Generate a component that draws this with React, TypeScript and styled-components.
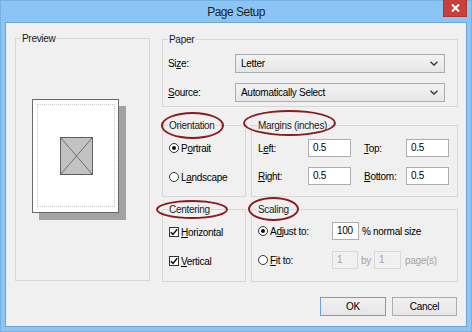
import React from 'react';
import styled, { createGlobalStyle } from 'styled-components';

const FONT = `"Liberation Sans", Arial, sans-serif`;

const GlobalStyle = createGlobalStyle`
  html, body { margin: 0; padding: 0; background: #ffffff; }
  body { font-family: ${FONT}; font-size: 10px; letter-spacing: -0.3px; color: #000; }
  * { box-sizing: border-box; }
`;

const Window = styled.div`
  width: 472px;
  height: 332px;
  background: #8bc5f6;
  border: 1px solid #78b0e4;
  display: flex;
  flex-direction: column;
  padding: 0 4px 4px;
`;

const TitleBar = styled.div`
  height: 21px;
  display: grid;
  grid-template-columns: 1fr auto 1fr;
  align-items: center;
`;

const Title = styled.div`
  grid-column: 2;
  font-size: 12px;
  letter-spacing: -0.5px;
  line-height: 22px;
  color: #1e1e1e;
`;

const CloseButton = styled.div`
  grid-column: 3;
  justify-self: end;
  align-self: start;
  margin-top: -1px;
  width: 24px;
  height: 17px;
  background: #c8403e;
  border: 1px solid #b23532;
  border-top: none;
  display: flex;
  align-items: center;
  justify-content: center;
`;

const Body = styled.div`
  flex: 1;
  background: #f0f0f0;
  border: 1px solid #6ea5da;
  padding: 9px 8px 0 9px;
  display: flex;
  flex-direction: column;
`;

const Main = styled.div`
  display: grid;
  grid-template-columns: 135px 296px;
  column-gap: 12px;
  height: 250px;
`;

const Column = styled.div`
  display: flex;
  flex-direction: column;
  padding-top: 1px;
`;

const Pair = styled.div<{ $mt: number }>`
  display: grid;
  grid-template-columns: 84px 207px;
  column-gap: 5px;
  margin-top: ${p => p.$mt}px;
`;

const Group = styled.fieldset<{ $h: number }>`
  margin: 0;
  padding: 0;
  min-width: 0;
  border: 1px solid #d7d7d7;
  height: ${p => p.$h}px;
`;

const Legend = styled.legend`
  position: relative;
  margin-left: 5px;
  padding: 0 1px;
  height: 13px;
  line-height: 13px;
  color: #1a1a1a;
`;

const Ring = styled.span<{ $x: number; $y: number; $w: number; $h: number }>`
  position: absolute;
  left: ${p => p.$x}px;
  top: ${p => p.$y}px;
  width: ${p => p.$w}px;
  height: ${p => p.$h}px;
  border: 2px solid #8b1b1e;
  border-radius: 50%;
  pointer-events: none;
`;

/* Preview */
const PreviewArea = styled.div`
  padding: 54px 0 0 16px;
`;

const Page = styled.div`
  width: 87px;
  height: 114px;
  background: #ffffff;
  border: 1px solid #6a6a6a;
  box-shadow: 7px 7px 0 #a2a2a2;
  padding: 4px 3px 5px 4px;
`;

const PrintArea = styled.div`
  height: 100%;
  border: 1px dotted #c6c6c6;
  display: flex;
  align-items: center;
  justify-content: center;
`;

const Picture = styled.div`
  width: 33px;
  height: 38px;
  background: #c2c2c2;
  border: 1px solid #5e5e5e;
  display: flex;
  margin-left: 1px;
`;

/* Paper */
const PaperGrid = styled.div`
  display: grid;
  grid-template-columns: 67px 210px;
  row-gap: 10px;
  align-items: center;
  padding: 8px 0 0 5px;
`;

const Label = styled.span<{ $indent?: number; $muted?: boolean }>`
  padding-left: ${p => p.$indent ?? 0}px;
  color: ${p => (p.$muted ? '#a3a3a3' : '#000')};
  white-space: nowrap;
`;

const Key = styled.u`
  text-decoration-thickness: 1px;
  text-underline-offset: 1px;
`;

const Select = styled.div`
  height: 19px;
  border: 1px solid #acacac;
  background: linear-gradient(#f3f3f3, #e6e6e6);
  display: flex;
  align-items: center;
  justify-content: space-between;
  padding: 0 6px 0 5px;
`;

/* Options (radio / checkbox) */
const OptionList = styled.div`
  display: flex;
  flex-direction: column;
  padding: 7px 0 0 6px;
`;

const Option = styled.div<{ $gap: number }>`
  display: flex;
  align-items: center;
  height: 18px;
  gap: 2px;
  & + & {
    margin-top: ${p => p.$gap}px;
  }
`;

const Radio = styled.span<{ $on?: boolean }>`
  width: 10px;
  height: 10px;
  border-radius: 50%;
  border: 1px solid #333333;
  background: #ffffff;
  display: flex;
  align-items: center;
  justify-content: center;
  flex: none;
  &::after {
    content: '';
    display: ${p => (p.$on ? 'block' : 'none')};
    width: 4px;
    height: 4px;
    border-radius: 50%;
    background: #111111;
  }
`;

const Check = styled.span`
  width: 10px;
  height: 10px;
  border: 1px solid #333333;
  background: #ffffff;
  display: flex;
  align-items: center;
  justify-content: center;
  flex: none;
`;

/* Margins */
const MarginGrid = styled.div`
  display: grid;
  grid-template-columns: 50px 43px 55px 43px;
  grid-auto-rows: 18px;
  row-gap: 10px;
  align-items: center;
  padding: 7px 0 0 6px;
`;

const Field = styled.div<{ $w: number; $disabled?: boolean }>`
  width: ${p => p.$w}px;
  height: 18px;
  border: 1px solid ${p => (p.$disabled ? '#d9d9d9' : '#abadb3')};
  background: ${p => (p.$disabled ? '#f0f0f0' : '#ffffff')};
  color: ${p => (p.$disabled ? '#a0a0a0' : '#000')};
  padding: 0 4px;
  line-height: 16px;
  flex: none;
`;

/* Scaling */
const ScaleList = styled.div`
  display: flex;
  flex-direction: column;
  gap: 11px;
  padding: 6px 0 0 6px;
`;

const ScaleRow = styled.div`
  display: flex;
  align-items: center;
  height: 18px;
`;

const ScaleChoice = styled.div`
  display: flex;
  align-items: center;
  gap: 2px;
  width: 74px;
`;

const After = styled.span<{ $ml: number; $mr?: number; $muted?: boolean }>`
  margin-left: ${p => p.$ml}px;
  margin-right: ${p => p.$mr ?? 0}px;
  color: ${p => (p.$muted ? '#a3a3a3' : '#000')};
  white-space: nowrap;
`;

/* Buttons */
const ButtonBar = styled.div`
  display: flex;
  justify-content: flex-end;
  gap: 6px;
  margin-top: 15px;
  padding-right: 1px;
`;

const Button = styled.button<{ $w: number; $default?: boolean }>`
  width: ${p => p.$w}px;
  height: 19px;
  padding: 0;
  font-family: ${FONT};
  font-size: 10px;
  letter-spacing: -0.3px;
  color: #000;
  border: 1px solid ${p => (p.$default ? '#5fa2e8' : '#adadad')};
  background: linear-gradient(#f1f1f1, #e5e5e5);
`;

const Chevron = () => (
  <svg width="8" height="5" viewBox="0 0 8 5">
    <path d="M0.5 0.8 L4 4 L7.5 0.8" fill="none" stroke="#333" strokeWidth="1.3" />
  </svg>
);

const CheckMark = () => (
  <svg width="8" height="8" viewBox="0 0 8 8">
    <path d="M0.8 4.2 L3 6.4 L7.2 1.2" fill="none" stroke="#111" strokeWidth="1.5" />
  </svg>
);

export default function App() {
  return (
    <>
      <GlobalStyle />
      <Window>
        <TitleBar>
          <Title>Page Setup</Title>
          <CloseButton>
            <svg width="9" height="8" viewBox="0 0 9 8">
              <path d="M1 0.5 L8 7.5 M8 0.5 L1 7.5" stroke="#fff" strokeWidth="2" />
            </svg>
          </CloseButton>
        </TitleBar>
        <Body>
          <Main>
            <Group $h={249}>
              <Legend>Preview</Legend>
              <PreviewArea>
                <Page>
                  <PrintArea>
                    <Picture>
                      <svg width="31" height="36" viewBox="0 0 31 36">
                        <path d="M0 0 L31 36 M31 0 L0 36" stroke="#5a5a5a" strokeWidth="0.8" />
                      </svg>
                    </Picture>
                  </PrintArea>
                </Page>
              </PreviewArea>
            </Group>

            <Column>
              <Group $h={74}>
                <Legend>Paper</Legend>
                <PaperGrid>
                  <Label>Si<Key>z</Key>e:</Label>
                  <Select>
                    <span>Letter</span>
                    <Chevron />
                  </Select>
                  <Label><Key>S</Key>ource:</Label>
                  <Select>
                    <span>Automatically Select</span>
                    <Chevron />
                  </Select>
                </PaperGrid>
              </Group>

              <Pair $mt={12}>
                <Group $h={78}>
                  <Legend>
                    Orientation
                    <Ring $x={-7} $y={-7} $w={63} $h={27} />
                  </Legend>
                  <OptionList>
                    <Option $gap={10}>
                      <Radio $on />
                      <Label>P<Key>o</Key>rtrait</Label>
                    </Option>
                    <Option $gap={10}>
                      <Radio />
                      <Label>L<Key>a</Key>ndscape</Label>
                    </Option>
                  </OptionList>
                </Group>
                <Group $h={78}>
                  <Legend>
                    Margins (inches)
                    <Ring $x={-14} $y={-9} $w={93} $h={26} />
                  </Legend>
                  <MarginGrid>
                    <Label>L<Key>e</Key>ft:</Label>
                    <Field $w={43}>0.5</Field>
                    <Label $indent={13}><Key>T</Key>op:</Label>
                    <Field $w={43}>0.5</Field>
                    <Label><Key>R</Key>ight:</Label>
                    <Field $w={43}>0.5</Field>
                    <Label $indent={13}><Key>B</Key>ottom:</Label>
                    <Field $w={43}>0.5</Field>
                  </MarginGrid>
                </Group>
              </Pair>

              <Pair $mt={6}>
                <Group $h={79}>
                  <Legend>
                    Centering
                    <Ring $x={-12} $y={-3} $w={72} $h={19} />
                  </Legend>
                  <OptionList>
                    <Option $gap={11}>
                      <Check><CheckMark /></Check>
                      <Label><Key>H</Key>orizontal</Label>
                    </Option>
                    <Option $gap={11}>
                      <Check><CheckMark /></Check>
                      <Label><Key>V</Key>ertical</Label>
                    </Option>
                  </OptionList>
                </Group>
                <Group $h={79}>
                  <Legend>
                    Scaling
                    <Ring $x={-9} $y={-6} $w={51} $h={24} />
                  </Legend>
                  <ScaleList>
                    <ScaleRow>
                      <ScaleChoice>
                        <Radio $on />
                        <Label>A<Key>d</Key>just to:</Label>
                      </ScaleChoice>
                      <Field $w={27}>100</Field>
                      <After $ml={3}>% normal size</After>
                    </ScaleRow>
                    <ScaleRow>
                      <ScaleChoice>
                        <Radio />
                        <Label><Key>F</Key>it to:</Label>
                      </ScaleChoice>
                      <Field $w={26} $disabled>1</Field>
                      <After $ml={3} $mr={3} $muted>by</After>
                      <Field $w={27} $disabled>1</Field>
                      <After $ml={4} $muted>page(s)</After>
                    </ScaleRow>
                  </ScaleList>
                </Group>
              </Pair>
            </Column>
          </Main>
          <ButtonBar>
            <Button $w={66} $default>OK</Button>
            <Button $w={65}>Cancel</Button>
          </ButtonBar>
        </Body>
      </Window>
    </>
  );
}
